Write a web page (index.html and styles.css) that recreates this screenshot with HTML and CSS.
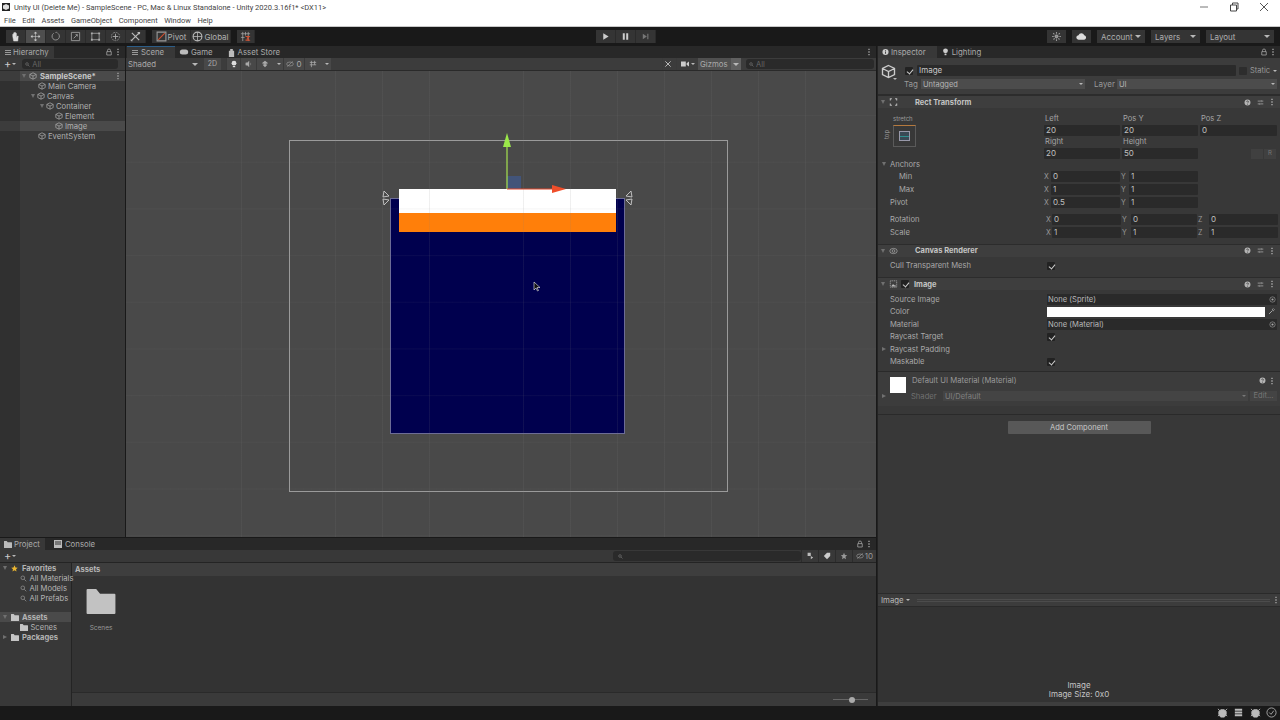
FILE: index.html
```html
<!DOCTYPE html>
<html>
<head>
    <title>Unity UI (Delete Me)</title>
    <link rel="stylesheet" href="styles.css">
</head>
<body>
    <svg class="defs" width="0" height="0">
        <symbol id="cube" viewBox="0 0 10 10"><path d="M5 1 9 3v4L5 9 1 7V3zM1 3l4 2 4-2M5 5v4" fill="none" stroke="currentColor" stroke-width=".9"/></symbol>
        <symbol id="kebab" viewBox="0 0 4 10"><path d="M1.200 1h1.600v1.600H1.200zM1.200 4.200h1.600v1.600H1.200zM1.200 7.400h1.600V9H1.200z" fill="currentColor"/></symbol>
        <symbol id="lock" viewBox="0 0 8 10"><path d="M2 4.500V3a2 2 0 0 1 4 0v1.500M1 4.500h6V9H1z" fill="none" stroke="currentColor"/></symbol>
        <symbol id="help" viewBox="0 0 8 8"><circle cx="4" cy="4" r="3.400" fill="currentColor"/><path d="M3 3.200a1 1 0 1 1 1.400.9L4 4.600M4 5.400v1" fill="none" stroke="#333" stroke-width=".8"/></symbol>
        <symbol id="sliders" viewBox="0 0 10 10"><path d="M1 3h4M7 3h2M1 7h2M5 7h4M6 1.500v3M4 5.500v3" fill="none" stroke="currentColor"/></symbol>
        <symbol id="search" viewBox="0 0 10 10"><circle cx="4" cy="4" r="2.600" fill="none" stroke="currentColor"/><path d="m6 6 3 3" stroke="currentColor"/></symbol>
        <symbol id="target" viewBox="0 0 10 10"><circle cx="5" cy="5" r="3.800" fill="none" stroke="currentColor" stroke-width=".8"/><circle cx="5" cy="5" r="1.500" fill="currentColor"/></symbol>
        <symbol id="folder" viewBox="0 0 30 26"><path d="M1 0h9l4 5h15a1 1 0 0 1 1 1v19a1 1 0 0 1-1 1H1a1 1 0 0 1-1-1V1a1 1 0 0 1 1-1z" fill="currentColor"/></symbol>
        <symbol id="bug" viewBox="0 0 12 12"><path d="M4 3h4l2 2v3l-2 3H4L2 8V5zM1 2l2 2M11 2 9 4M1 10l2-2M11 10 9 8" fill="currentColor" stroke="currentColor"/></symbol>
    </svg>

    <div class="titlebar">
        <div class="title-row">
            <span class="app-icon"><svg viewBox="0 0 8 8"><path d="M4 1 7 2.600v3L4 7 1 5.600v-3z" fill="#ddd"/></svg></span>
            <span class="title-text">Unity UI (Delete Me) - SampleScene - PC, Mac &amp; Linux Standalone - Unity 2020.3.16f1* &lt;DX11&gt;</span>
            <div class="win-controls">
                <svg viewBox="0 0 10 10"><path d="M1 5h8" stroke="#777"/></svg>
                <svg viewBox="0 0 10 10"><path d="M1.500 3h6v6h-6zM3.500 3V1h5.500v6H7.500" fill="none" stroke="#444"/></svg>
                <svg viewBox="0 0 10 10"><path d="m1 1 8 8M9 1 1 9" stroke="#555"/></svg>
            </div>
        </div>
        <div class="menu-row">
            <span>File</span><span>Edit</span><span>Assets</span><span>GameObject</span><span>Component</span><span>Window</span><span>Help</span>
        </div>
    </div>

    <div class="toolbar">
        <div class="tool-group tools">
            <button class="tool"><svg viewBox="0 0 12 12"><path d="M3 6V3.500h1V6V2h1v4V1.500h1V6V2.500h1V7l1-1.500h1L8.500 11H4z" fill="#ddd" stroke="#ddd" stroke-width=".5"/></svg></button>
            <button class="tool active"><svg viewBox="0 0 12 12"><path d="M6 1v10M1 6h10M6 1 4.800 2.500h2.400zM6 11 4.800 9.500h2.400zM1 6l1.500-1.200v2.400zM11 6 9.500 4.800v2.400z" fill="#ccc" stroke="#ccc" stroke-width=".6"/></svg></button>
            <button class="tool"><svg viewBox="0 0 12 12"><path d="M4 2.500a4 4 0 1 0 4.500 0M8 1.500a4 4 0 0 0-2 .2" fill="none" stroke="#999"/></svg></button>
            <button class="tool"><svg viewBox="0 0 12 12"><path d="M1.500 1.500h9v9h-9zM4 8l4-4M6 4h2v2" fill="none" stroke="#999"/></svg></button>
            <button class="tool"><svg viewBox="0 0 12 12"><path d="M2 2.500h8v7H2z" fill="none" stroke="#999"/><path d="M1 1.500h2v2H1zM9 1.500h2v2H9zM1 8.500h2v2H1zM9 8.500h2v2H9z" fill="#aaa"/></svg></button>
            <button class="tool"><svg viewBox="0 0 12 12"><circle cx="6" cy="6" r="4.500" fill="none" stroke="#888" stroke-dasharray="2 1"/><path d="M3 6h6M6 3v6" stroke="#aaa"/></svg></button>
            <button class="tool"><svg viewBox="0 0 12 12"><path d="m2 2 8 8M10 2 2 10" stroke="#bbb" stroke-width="1.300"/><path d="M8 1h3v2L9.500 4zM1 9l2 2-1 .5-1.500-1.500z" fill="#bbb"/></svg></button>
        </div>
        <div class="tool-group handle">
            <button class="tool pivot"><svg viewBox="0 0 10 10"><path d="M1 1h8v8H1z" fill="none" stroke="#999"/><path d="M2 8 8 2" stroke="#d05030"/></svg>Pivot</button>
            <button class="tool global"><svg viewBox="0 0 10 10"><circle cx="5" cy="5" r="4" fill="none" stroke="#bbb"/><path d="M1 5h8M5 1v8" stroke="#bbb" stroke-width=".7"/></svg>Global</button>
        </div>
        <button class="tool snap"><svg viewBox="0 0 12 12"><path d="M3 1v10M6 1v4M9 1v10M1 3h10M1 7h4" stroke="#aaa" stroke-width=".8"/><path d="M6 6h4l-2 2 2 2H6" fill="none" stroke="#d05030" stroke-width="1.200"/></svg></button>

        <div class="tool-group playback">
            <button class="tool"><svg viewBox="0 0 10 10"><path d="M2.500 1.500 8.500 5l-6 3.500z" fill="#ccc"/></svg></button>
            <button class="tool"><svg viewBox="0 0 10 10"><path d="M2 1.500h2.200v7H2zM5.800 1.500H8v7H5.800z" fill="#ccc"/></svg></button>
            <button class="tool"><svg viewBox="0 0 10 10"><path d="M2 2 6.500 5 2 8zM7 2h1.200v6H7z" fill="#777"/></svg></button>
        </div>

        <div class="toolbar-right">
            <button class="tool square"><svg viewBox="0 0 10 10"><path d="M5 1v8M1 5h8M2 2l6 6M8 2 2 8" stroke="#999" stroke-dasharray="1.500 .7"/></svg></button>
            <button class="tool square"><svg viewBox="0 0 12 8"><path d="M3 7.500a2.500 2.500 0 0 1-.3-5A3.500 3.500 0 0 1 9 2.600a2.500 2.500 0 0 1 0 4.900z" fill="#ddd"/></svg></button>
            <button class="tool drop account">Account<i class="caret"></i></button>
            <button class="tool drop layers">Layers<i class="caret"></i></button>
            <button class="tool drop layout-btn">Layout<i class="caret"></i></button>
        </div>
    </div>

    <div class="workspace">
        <div class="left-col">
            <div class="top-row">
                <section class="hierarchy">
                    <div class="tabstrip">
                        <div class="tab current"><span class="burger"></span>Hierarchy</div>
                        <div class="tab-icons"><svg class="ic-lock"><use href="#lock"/></svg><svg class="ic-kebab"><use href="#kebab"/></svg></div>
                    </div>
                    <div class="panel-tools">
                        <span class="plus">+</span><i class="caret"></i>
                        <div class="search small"><svg><use href="#search"/></svg>All</div>
                    </div>
                    <div class="tree">
                        <div class="tree-row scene-row"><i class="arrow"></i><svg class="cube"><use href="#cube"/></svg><b>SampleScene*</b><svg class="ic-kebab end"><use href="#kebab"/></svg></div>
                        <div class="tree-row d1"><svg class="cube"><use href="#cube"/></svg>Main Camera</div>
                        <div class="tree-row d1"><i class="arrow"></i><svg class="cube"><use href="#cube"/></svg>Canvas</div>
                        <div class="tree-row d2"><i class="arrow"></i><svg class="cube"><use href="#cube"/></svg>Container</div>
                        <div class="tree-row d3"><svg class="cube"><use href="#cube"/></svg>Element</div>
                        <div class="tree-row d3 selected"><svg class="cube"><use href="#cube"/></svg>Image</div>
                        <div class="tree-row d1"><svg class="cube"><use href="#cube"/></svg>EventSystem</div>
                    </div>
                </section>

                <section class="scene">
                    <div class="tabstrip">
                        <div class="tab current blue-top"><span class="burger"></span>Scene</div>
                        <div class="tab"><svg class="tab-ic" viewBox="0 0 12 8"><rect x="1" y="1" width="10" height="6" rx="3" fill="#bbb"/></svg>Game</div>
                        <div class="tab"><svg class="tab-ic bag" viewBox="0 0 8 10"><path d="M1 3h6v7H1zM2.500 3V1h3v2" fill="#bbb"/></svg>Asset Store</div>
                        <div class="tab-icons"><svg class="ic-kebab"><use href="#kebab"/></svg></div>
                    </div>
                    <div class="scene-tools">
                        <div class="shaded">Shaded<i class="caret"></i></div>
                        <div class="btn2d">2D</div>
                        <div class="scene-btn first-btn"><svg viewBox="0 0 10 10"><circle cx="5" cy="4" r="3" fill="#ddd"/><path d="M3.500 7.500h3V9h-3z" fill="#ddd"/></svg></div>
                        <div class="scene-btn"><svg viewBox="0 0 10 10"><path d="M1 3.500h2l2-2v7l-2-2H1zM7 3.500v3" fill="#aaa" stroke="#aaa" stroke-width=".5"/></svg></div>
                        <div class="scene-btn fx"><svg viewBox="0 0 10 10"><path d="M5 1 9 4 5 5 1 4zM5 5l3 1-3 3-3-3z" fill="#aaa"/></svg><i class="caret"></i></div>
                        <div class="scene-btn eye"><svg viewBox="0 0 12 10"><ellipse cx="6" cy="5" rx="5" ry="3" fill="none" stroke="#999"/><path d="M2 9 10 1" stroke="#999"/></svg><em>0</em></div>
                        <div class="scene-btn fx"><svg viewBox="0 0 10 10"><path d="M3 1v8M7 1v5M1 3h8M1 6h8" stroke="#aaa"/></svg><i class="caret"></i></div>
                        <div class="scene-tools-right">
                            <div class="scene-btn flat x-tool"><svg viewBox="0 0 12 12"><path d="m2 2 8 8M10 2 2 10" stroke="#ccc" stroke-width="1.300"/></svg></div>
                            <div class="scene-btn flat cam"><svg viewBox="0 0 10 8"><path d="M0 1h6v6H0zM7 3l3-2v6L7 5z" fill="#ccc"/></svg><i class="caret"></i></div>
                            <div class="gizmos">Gizmos<span class="gizmo-drop"><i class="caret"></i></span></div>
                            <div class="search big"><svg><use href="#search"/></svg>All</div>
                        </div>
                    </div>
                    <div class="viewport">
                        <div class="canvas-frame"></div>
                        <div class="navy"></div>
                        <div class="element-white"></div>
                        <div class="element-orange"></div>
                        <div class="grid-over"></div>
                        <svg class="gizmo-overlay" viewBox="0 0 750 466" width="750" height="466">
                            <rect x="381" y="105" width="14" height="13" fill="#3f5b94" fill-opacity=".65"/>
                            <path d="M381 118V75" stroke="#a6e34f" stroke-width="1.200"/>
                            <path d="M381 62 385 76H377z" fill="#9be84a"/>
                            <path d="M381 118h50" stroke="#e0492c" stroke-width="1.200"/>
                            <path d="M440 118 426 114v8z" fill="#ef4e2a"/>
                            <path d="M258 120 263 125 257 126zM257 128 263 129 258 134z" fill="none" stroke="#ccc" stroke-width=".9"/>
                            <path d="M505 120 500 125 506 126zM506 128 500 129 505 134z" fill="none" stroke="#ccc" stroke-width=".9"/>
                            <path d="M408 211v8l2-2 1.500 3 1-.5-1.500-3h3z" fill="#111" stroke="#eee" stroke-width=".6"/>
                        </svg>
                    </div>
                </section>
            </div>

            <section class="project">
                <div class="tabstrip">
                    <div class="tab current"><svg class="tab-ic small-ic"><use href="#folder"/></svg>Project</div>
                    <div class="tab"><svg class="tab-ic" viewBox="0 0 10 8"><path d="M1 0h8v8H1z" fill="#bbb"/><path d="M2 2h6M2 4h6" stroke="#333"/></svg>Console</div>
                    <div class="tab-icons"><svg class="ic-lock"><use href="#lock"/></svg><svg class="ic-kebab"><use href="#kebab"/></svg></div>
                </div>
                <div class="panel-tools project-tools">
                    <span class="plus">+</span><i class="caret"></i>
                    <div class="search project-search"><svg><use href="#search"/></svg></div>
                    <div class="project-btns">
                        <span><svg viewBox="0 0 10 10"><path d="M2 1h4v4H2zM6 5l3 2-3 2z" fill="#bbb"/></svg></span>
                        <span><svg viewBox="0 0 10 10"><path d="M1 5 5 1h4v4L5 9z" fill="#ccc"/></svg></span>
                        <span><svg viewBox="0 0 10 10"><path d="m5 1 1.200 2.800 2.800.2-2.200 2 .7 3L5 7.500 2.500 9l.7-3L1 4l2.800-.2z" fill="#999"/></svg></span>
                        <span class="hidden-count"><svg viewBox="0 0 12 10"><ellipse cx="6" cy="5" rx="5" ry="3" fill="none" stroke="#999"/><path d="M2 9 10 1" stroke="#999"/></svg>10</span>
                    </div>
                </div>
                <div class="project-body">
                    <div class="project-side">
                        <div class="side-row head"><i class="arrow"></i><svg class="star" viewBox="0 0 10 10"><path d="m5 .5 1.400 3 3.200.3-2.400 2.200.7 3.300L5 7.600 2.100 9.300l.7-3.300L.4 3.800l3.200-.3z" fill="#eab530"/></svg><b>Favorites</b></div>
                        <div class="side-row sub"><svg class="loupe"><use href="#search"/></svg>All Materials</div>
                        <div class="side-row sub"><svg class="loupe"><use href="#search"/></svg>All Models</div>
                        <div class="side-row sub"><svg class="loupe"><use href="#search"/></svg>All Prefabs</div>
                        <div class="side-gap"></div>
                        <div class="side-row head selected"><i class="arrow"></i><svg class="mini-folder"><use href="#folder"/></svg><b>Assets</b></div>
                        <div class="side-row sub folder-sub"><svg class="mini-folder"><use href="#folder"/></svg>Scenes</div>
                        <div class="side-row head"><i class="arrow closed"></i><svg class="mini-folder"><use href="#folder"/></svg><b>Packages</b></div>
                    </div>
                    <div class="project-main">
                        <div class="breadcrumb">Assets</div>
                        <div class="files">
                            <div class="file"><svg class="big-folder"><use href="#folder"/></svg><span>Scenes</span></div>
                        </div>
                        <div class="project-foot"><div class="slider"><span></span></div></div>
                    </div>
                </div>
            </section>
        </div>

        <aside class="inspector">
            <div class="tabstrip">
                <div class="tab current"><svg class="tab-ic" viewBox="0 0 8 8"><circle cx="4" cy="4" r="3.500" fill="#ccc"/><path d="M4 3.500V6M4 2v1" stroke="#333"/></svg>Inspector</div>
                <div class="tab"><svg class="tab-ic" viewBox="0 0 8 10"><circle cx="4" cy="3.500" r="3" fill="#ccc"/><path d="M2.800 7h2.400v2H2.800z" fill="#ccc"/></svg>Lighting</div>
                <div class="tab-icons"><svg class="ic-lock"><use href="#lock"/></svg><svg class="ic-kebab"><use href="#kebab"/></svg></div>
            </div>

            <div class="object-head">
                <div class="object-icon"><svg class="object-cube"><use href="#cube"/></svg><i class="caret"></i></div>
                <div class="object-rows">
                    <div class="name-row">
                        <span class="check"></span>
                        <div class="field name-field">Image</div>
                        <span class="check empty"></span><span class="static">Static</span><i class="caret"></i>
                    </div>
                    <div class="tag-row">
                        <span class="tag-label">Tag</span>
                        <div class="select tag-select">Untagged<i class="caret"></i></div>
                        <span class="tag-label layer">Layer</span>
                        <div class="select layer-select">UI<i class="caret"></i></div>
                    </div>
                </div>
            </div>

            <div class="comp-head first">
                <i class="arrow"></i><svg class="comp-ic" viewBox="0 0 10 10"><path d="M1 3V1h2M7 1h2v2M9 7v2H7M3 9H1V7" fill="none" stroke="#bbb" stroke-width="1.300"/></svg>
                <b>Rect Transform</b>
                <div class="comp-actions"><svg><use href="#help"/></svg><svg><use href="#sliders"/></svg><svg class="ic-kebab"><use href="#kebab"/></svg></div>
            </div>

            <div class="rect-body">
                <div class="anchor-box">
                    <span class="stretch">stretch</span>
                    <span class="top-label">top</span>
                    <div class="anchor-preset"><div class="anchor-inner"></div></div>
                </div>
                <div class="rect-grid">
                    <label>Left</label><label>Pos Y</label><label>Pos Z</label>
                    <div class="field">20</div><div class="field">20</div><div class="field">0</div>
                    <label>Right</label><label>Height</label><div class="blueprint"><span></span><span>R</span></div>
                    <div class="field">20</div><div class="field">50</div>
                </div>
            </div>

            <div class="prop anchors-head"><i class="arrow"></i>Anchors</div>
            <div class="prop indent"><span class="prop-name">Min</span><div class="xy"><em>X</em><div class="field">0</div><em>Y</em><div class="field">1</div></div></div>
            <div class="prop indent"><span class="prop-name">Max</span><div class="xy"><em>X</em><div class="field">1</div><em>Y</em><div class="field">1</div></div></div>
            <div class="prop pivot-row"><span class="prop-name">Pivot</span><div class="xy"><em>X</em><div class="field">0.5</div><em>Y</em><div class="field">1</div></div></div>
            <div class="prop rotation-row"><span class="prop-name">Rotation</span><div class="xyz"><em>X</em><div class="field">0</div><em>Y</em><div class="field">0</div><em>Z</em><div class="field">0</div></div></div>
            <div class="prop"><span class="prop-name">Scale</span><div class="xyz"><em>X</em><div class="field">1</div><em>Y</em><div class="field">1</div><em>Z</em><div class="field">1</div></div></div>

            <div class="comp-head">
                <i class="arrow"></i><svg class="comp-ic" viewBox="0 0 12 10"><ellipse cx="6" cy="5" rx="5" ry="3.500" fill="none" stroke="#bbb" stroke-width=".8"/><circle cx="6" cy="5" r="1.800" fill="none" stroke="#bbb" stroke-width=".8"/></svg>
                <b>Canvas Renderer</b>
                <div class="comp-actions"><svg><use href="#help"/></svg><svg><use href="#sliders"/></svg><svg class="ic-kebab"><use href="#kebab"/></svg></div>
            </div>
            <div class="prop cull"><span class="prop-name">Cull Transparent Mesh</span><span class="check"></span></div>

            <div class="comp-head image-head">
                <i class="arrow"></i><svg class="comp-ic" viewBox="0 0 10 10"><path d="M1 1h8v8H1z" fill="none" stroke="#aaa" stroke-dasharray="1.500 .8"/><path d="m2 8 2.500-3L6 7l1-1 1 2z" fill="#bbb"/></svg>
                <span class="check"></span><b>Image</b>
                <div class="comp-actions"><svg><use href="#help"/></svg><svg><use href="#sliders"/></svg><svg class="ic-kebab"><use href="#kebab"/></svg></div>
            </div>
            <div class="prop first-image"><span class="prop-name">Source Image</span><div class="objfield">None (Sprite)<svg><use href="#target"/></svg></div></div>
            <div class="prop"><span class="prop-name">Color</span><div class="colorfield"><span class="swatch"></span><svg viewBox="0 0 10 10"><path d="M1.500 8.500 6 4M6 2.500l1.500-1.500L9 2.500 7.500 4z" stroke="#bbb" stroke-width="1.200"/></svg></div></div>
            <div class="prop"><span class="prop-name">Material</span><div class="objfield">None (Material)<svg><use href="#target"/></svg></div></div>
            <div class="prop"><span class="prop-name">Raycast Target</span><span class="check"></span></div>
            <div class="prop"><i class="arrow closed"></i><span class="prop-name">Raycast Padding</span></div>
            <div class="prop"><span class="prop-name">Maskable</span><span class="check"></span></div>

            <div class="material">
                <div class="mat-swatch"></div>
                <i class="arrow closed"></i>
                <div class="mat-rows">
                    <div class="mat-title">Default UI Material (Material)<div class="comp-actions"><svg><use href="#help"/></svg><svg class="ic-kebab"><use href="#kebab"/></svg></div></div>
                    <div class="mat-shader"><span>Shader</span><div class="select shader-select">UI/Default<i class="caret"></i></div><div class="edit-btn">Edit...</div></div>
                </div>
            </div>

            <div class="add-wrap"><button class="add-component">Add Component</button></div>
            <div class="inspector-spacer"></div>

            <div class="preview-bar">
                <span class="preview-name">Image<i class="caret"></i></span>
                <div class="preview-grip"></div>
                <svg class="ic-kebab"><use href="#kebab"/></svg>
            </div>
            <div class="preview">
                <div>Image</div>
                <div>Image Size: 0x0</div>
            </div>
        </aside>
    </div>

    <div class="statusbar">
        <svg><use href="#bug"/></svg>
        <svg viewBox="0 0 12 12"><path d="M2 2h8v2H2zM2 5h8v2H2zM2 8h8v2H2z" fill="#bbb"/></svg>
        <svg><use href="#bug"/></svg>
        <svg viewBox="0 0 12 12"><circle cx="6" cy="6" r="5" fill="none" stroke="#aaa"/><path d="m3.500 6 2 2 3-4" fill="none" stroke="#aaa"/></svg>
    </div>
</body>
</html>
```

FILE: styles.css
```css
* {
    margin: 0;
    padding: 0;
    box-sizing: border-box;
}

html, body {
    width: 1280px;
    height: 720px;
    overflow: hidden;
}

body {
    font-family: Inter, "Liberation Sans", sans-serif;
    font-size: 7.5px;
    color: #b8b8b8;
    background: #191919;
    display: flex;
    flex-direction: column;
}

.defs {
    position: absolute;
}

button {
    border: 0;
    font: inherit;
    color: inherit;
}

svg {
    display: block;
    flex: none;
}

/* Window chrome */
.titlebar {
    height: 27px;
    background: #fff;
    color: #444;
    border-bottom: 1px solid #c8c8c8;
    font-family: Roboto, sans-serif;
    font-size: 7.5px;
    flex: none;
}

.title-row {
    height: 14px;
    display: flex;
    align-items: center;
    padding-left: 2px;
}

.app-icon {
    width: 8px;
    height: 8px;
    background: #222;
    margin-right: 4px;
}

.win-controls {
    margin-left: auto;
    display: flex;
    gap: 20px;
    padding-right: 11px;
}

.win-controls svg {
    width: 10px;
    height: 10px;
}

.menu-row {
    display: flex;
    gap: 6.500px;
    padding-left: 4px;
    height: 12px;
    align-items: center;
}

.toolbar {
    height: 19px;
    background: #191919;
    display: flex;
    align-items: center;
    padding-left: 6px;
    position: relative;
    flex: none;
}

.tool-group {
    display: flex;
}

.tool {
    height: 13px;
    background: #343434;
    display: flex;
    align-items: center;
    justify-content: center;
    color: #b0b0b0;
    font-size: 8px;
    border-right: 1px solid #2a2a2a;
}

.tool svg {
    width: 11px;
    height: 11px;
}

.tools .tool {
    width: 20px;
}

.tool.active {
    background: #4e4e4e;
}

.handle {
    margin-left: 6px;
}

.pivot {
    width: 39px;
    gap: 1px;
}

.global {
    width: 40px;
    gap: 1px;
}

.snap {
    width: 18px;
    margin-left: 6px;
}

.playback {
    margin-left: 341px;
}

.playback .tool {
    width: 20px;
}

.playback .tool svg {
    width: 9px;
    height: 9px;
}

.toolbar-right {
    margin-left: auto;
    display: flex;
    gap: 6px;
    padding-right: 6px;
}

.square {
    width: 19px;
    border: 0;
}

.drop {
    justify-content: space-between;
    padding: 0 4px;
    border: 0;
}

.account {
    width: 48px;
}

.layers {
    width: 49px;
}

.layout-btn {
    width: 68px;
}

.caret {
    display: inline-block;
    width: 0;
    height: 0;
    border-left: 3px solid transparent;
    border-right: 3px solid transparent;
    border-top: 3px solid #b8b8b8;
    flex: none;
}

.arrow {
    display: inline-block;
    width: 0;
    height: 0;
    border-left: 2.500px solid transparent;
    border-right: 2.500px solid transparent;
    border-top: 4px solid #707070;
    flex: none;
}

.arrow.closed {
    border-top: 2.500px solid transparent;
    border-bottom: 2.500px solid transparent;
    border-left: 4px solid #707070;
    border-right: 0;
}

/* Layout */
.workspace {
    height: 660px;
    display: grid;
    grid-template-columns: 877px 403px;
    flex: none;
}

.left-col {
    display: flex;
    flex-direction: column;
    border-right: 1px solid #191919;
}

.top-row {
    height: 492px;
    display: grid;
    grid-template-columns: 126px 1fr;
    border-bottom: 1px solid #191919;
    flex: none;
}

.tabstrip {
    height: 12px;
    background: #282828;
    display: flex;
    align-items: stretch;
    position: relative;
}

.tab {
    display: flex;
    align-items: center;
    gap: 2px;
    padding: 0 5px;
    color: #aaa;
    font-size: 7.800px;
}

.tab.current {
    background: #383838;
}

.blue-top {
    box-shadow: inset 0 1px 0 #2c5d87;
}

.burger {
    width: 6px;
    height: 5px;
    border-top: 1px solid #999;
    border-bottom: 1px solid #999;
    position: relative;
}

.burger::after {
    content: "";
    position: absolute;
    left: 0;
    right: 0;
    top: 1px;
    height: 1px;
    background: #999;
}

.tab-ic {
    width: 10px;
    height: 8px;
}

.tab-ic.bag {
    width: 7px;
    height: 9px;
    margin-right: 1px;
}

.small-ic {
    width: 8px;
    height: 7px;
    color: #bbb;
}

.tab-icons {
    margin-left: auto;
    display: flex;
    align-items: center;
    gap: 4px;
    padding-right: 5px;
}

.ic-lock {
    width: 6px;
    height: 8px;
    color: #aaa;
}

.ic-kebab {
    width: 4px;
    height: 8px;
    color: #aaa;
}

/* Hierarchy */
.hierarchy {
    background: #383838;
    border-right: 1px solid #191919;
    display: flex;
    flex-direction: column;
}

.panel-tools {
    height: 13px;
    display: flex;
    align-items: center;
    background: #3a3a3a;
    border-bottom: 1px solid #2a2a2a;
    padding-left: 4px;
}

.plus {
    font-size: 11px;
    line-height: 1;
    color: #ccc;
    margin-right: 1px;
}

.panel-tools .caret {
    border-width: 2.500px 2.500px 0;
}

.search {
    background: #2a2a2a;
    border-radius: 3px;
    height: 10px;
    display: flex;
    align-items: center;
    gap: 2px;
    padding-left: 3px;
    color: #666;
}

.search svg {
    width: 5px;
    height: 5px;
    color: #888;
}

.search.small {
    width: 96px;
    margin-left: 6px;
}

.tree {
    flex: 1;
    background: linear-gradient(90deg, #303030 20px, #383838 20px);
    color: #b0b0b0;
    font-size: 7.700px;
}

.tree-row {
    height: 10px;
    display: flex;
    align-items: center;
    gap: 2px;
}

.tree-row .cube {
    width: 8px;
    height: 8px;
    color: #aaa;
}

.scene-row {
    background: linear-gradient(90deg, #3c3c3c 20px, #4a4a4a 20px);
    padding-left: 22px;
    height: 10px;
    color: #c8c8c8;
    gap: 3px;
}

.ic-kebab.end {
    margin-left: auto;
    margin-right: 5px;
}

.d1 {
    padding-left: 38px;
}

.d1 .arrow {
    margin-left: -7px;
}

.d2 {
    padding-left: 47px;
}

.d2 .arrow {
    margin-left: -7px;
}

.d3 {
    padding-left: 55px;
}

.tree-row.selected {
    background: linear-gradient(90deg, #3c3c3c 20px, #4a4a4a 20px);
}

/* Scene */
.scene {
    display: flex;
    flex-direction: column;
    background: #282828;
}

.scene .tab {
    padding: 0 11px 0 4px;
}

.scene .blue-top {
    margin-left: 1px;
    width: 48px;
    padding: 0 5px;
    gap: 3px;
}

.scene-tools {
    height: 13px;
    background: #3c3c3c;
    display: flex;
    align-items: center;
    border-bottom: 1px solid #2a2a2a;
    color: #aaa;
}

.shaded {
    width: 76px;
    padding: 0 4px 0 2px;
    display: flex;
    align-items: center;
    justify-content: space-between;
    font-size: 7.800px;
}

.btn2d {
    width: 17px;
    height: 12px;
    margin-left: 2px;
    background: #484848;
    text-align: center;
    line-height: 12px;
    font-size: 7px;
}

.scene-btn {
    width: 16px;
    height: 12px;
    background: #484848;
    border-left: 1px solid #3a3a3a;
    display: flex;
    align-items: center;
    justify-content: center;
    gap: 2px;
}

.scene-btn svg {
    width: 8px;
    height: 8px;
}

.scene-btn .caret {
    border-width: 2.500px 2.500px 0;
}

.scene-btn em {
    font-style: normal;
    font-size: 8px;
}

.scene-btn.first-btn {
    width: 14px;
    margin-left: 5px;
}

.scene-btn.fx {
    width: 27px;
    justify-content: space-between;
    padding: 0 2px 0 4px;
}

.scene-btn.eye {
    width: 21px;
}

.scene-tools-right {
    margin-left: auto;
    display: flex;
    align-items: center;
}

.scene-btn.flat {
    background: #3c3c3c;
}

.scene-btn.x-tool {
    width: 14px;
    padding-right: 3px;
}

.scene-btn.cam {
    width: 22px;
}

.gizmos {
    width: 43px;
    height: 12px;
    background: #505050;
    display: flex;
    align-items: center;
    padding-left: 2px;
    font-size: 7.800px;
    justify-content: space-between;
}

.gizmo-drop {
    width: 10px;
    height: 12px;
    background: #606060;
    display: flex;
    align-items: center;
    justify-content: center;
}

.search.big {
    width: 128px;
    margin: 0 2px 0 5px;
}

.viewport {
    flex: 1;
    position: relative;
    background-color: #494949;
    overflow: hidden;
}

.grid-over {
    position: absolute;
    left: 0;
    top: 0;
    right: 0;
    bottom: 0;
    background-image:
        linear-gradient(90deg, rgba(128, 128, 128, .12) 1px, transparent 1px),
        linear-gradient(rgba(128, 128, 128, .08) 1px, transparent 1px);
    background-size: 47px 46.700px;
    background-position: 21px 44px;
}

.canvas-frame {
    position: absolute;
    left: 163px;
    top: 69px;
    width: 439px;
    height: 352px;
    border: 1px solid #9a9a9a;
}

.navy {
    position: absolute;
    left: 264px;
    top: 127px;
    width: 235px;
    height: 236px;
    background: #00004e;
    box-shadow: inset 0 0 0 1px #6c6c96;
}

.element-white {
    position: absolute;
    left: 273px;
    top: 118px;
    width: 217px;
    height: 24px;
    background: #fff;
}

.element-orange {
    position: absolute;
    left: 273px;
    top: 142px;
    width: 217px;
    height: 19px;
    background: #ff7f0a;
}

.gizmo-overlay {
    position: absolute;
    left: 0;
    top: 0;
}

/* Project */
.project {
    flex: 1;
    display: flex;
    flex-direction: column;
    background: #333;
}

.project .tab {
    gap: 2px;
    padding: 0 5px 0 4px;
}

.project .tab + .tab {
    margin-left: 4px;
    gap: 2px;
}

.project-tools {
    height: 13px;
    background: #383838;
    border-bottom: 1px solid #242424;
}

.project-search {
    width: 190px;
    margin-left: 597px;
}

.project-search svg {
    margin-left: 2px;
}

.project-btns {
    display: flex;
    height: 12px;
    margin-left: auto;
}

.project-btns span {
    width: 17px;
    display: flex;
    align-items: center;
    justify-content: center;
    border-left: 1px solid #2c2c2c;
}

.project-btns svg {
    width: 8px;
    height: 8px;
}

.project-btns .hidden-count {
    width: 24px;
    gap: 1px;
    font-size: 8px;
    color: #999;
}

.project-body {
    flex: 1;
    display: grid;
    grid-template-columns: 72px 1fr;
}

.project-side {
    background: #383838;
    border-right: 1px solid #242424;
    font-size: 7.600px;
    color: #b4b4b4;
}

.side-row {
    height: 10px;
    display: flex;
    align-items: center;
    gap: 2px;
    white-space: nowrap;
}

.side-row.selected {
    background: #4a4a4a;
}

.head {
    padding-left: 3px;
}

.star {
    width: 7px;
    height: 7px;
    margin: 0 2px;
}

.sub {
    padding-left: 20px;
    gap: 2.500px;
}

.loupe {
    width: 7px;
    height: 7px;
    color: #999;
}

.mini-folder {
    width: 8px;
    height: 7px;
    color: #c4c4c4;
    margin: 0 1px 0 2px;
}

.side-gap {
    height: 9px;
}

.sub.folder-sub .mini-folder {
    margin: 0;
}

.project-main {
    display: flex;
    flex-direction: column;
}

.breadcrumb {
    height: 13px;
    background: #3e3e3e;
    display: flex;
    align-items: center;
    padding-left: 3px;
    font-weight: 700;
    font-size: 7.500px;
}

.files {
    flex: 1;
    padding: 13px 0 0 14px;
}

.file {
    width: 30px;
    display: flex;
    flex-direction: column;
    align-items: center;
    gap: 10px;
    font-size: 6.500px;
    color: #999;
}

.big-folder {
    width: 30px;
    height: 25px;
    color: #c2c2c2;
}

.project-foot {
    height: 14px;
    background: #3a3a3a;
    border-top: 1px solid #2a2a2a;
    display: flex;
    align-items: center;
    justify-content: flex-end;
    padding-right: 8px;
}

.slider {
    width: 35px;
    height: 1px;
    background: #666;
    display: flex;
    align-items: center;
    justify-content: center;
    padding-left: 3px;
}

.slider span {
    width: 6px;
    height: 6px;
    border-radius: 50%;
    background: #aaa;
}

/* Inspector */
.inspector {
    background: #383838;
    display: flex;
    flex-direction: column;
    border-left: 1px solid #232323;
}

.inspector .tabstrip {
    flex: none;
}

.inspector .tab {
    gap: 2px;
    padding: 0 11px 0 4px;
}

.inspector .tab + .tab {
    padding-left: 5px;
    gap: 3px;
}

.inspector .tab-ic {
    width: 7px;
    height: 8px;
}

.object-head {
    display: flex;
    padding: 6px 0 0 3px;
    height: 37px;
    background: #3c3c3c;
    border-bottom: 1px solid #2c2c2c;
    flex: none;
}

.object-icon {
    width: 15px;
    position: relative;
}

.object-icon .caret {
    position: absolute;
    left: 12px;
    top: 14px;
    border-width: 2px 2.500px 0;
}

.object-cube {
    width: 15px;
    height: 15px;
    color: #ccc;
}

.object-rows {
    flex: 1;
    padding-left: 9px;
}

.name-row {
    height: 13px;
    display: flex;
    align-items: center;
    padding-right: 3px;
}

.check {
    width: 8px;
    height: 8px;
    background: #222;
    border-radius: 1px;
    display: inline-block;
    position: relative;
    flex: none;
}

.check::after {
    content: "";
    position: absolute;
    left: 2.500px;
    top: 1px;
    width: 3px;
    height: 5px;
    border: solid #ccc;
    border-width: 0 1px 1px 0;
    transform: rotate(40deg);
}

.check.empty {
    background: #2d2d2d;
}

.check.empty::after {
    display: none;
}

.field {
    background: #2a2a2a;
    height: 11px;
    line-height: 11px;
    padding-left: 2px;
    color: #c0c0c0;
    border-radius: 1px;
    font-size: 8px;
}

.name-field {
    flex: 1;
    margin: 0 3px 0 4px;
    color: #c8c8c8;
}

.static {
    color: #999;
    margin: 0 3px 0 3px;
    font-size: 7.500px;
}

.name-row .caret,
.tag-row .caret {
    border-width: 2.500px 2.500px 0;
}

.tag-row {
    display: flex;
    align-items: center;
    height: 12px;
    margin-top: 1px;
    margin-left: -1px;
    padding-right: 3px;
}

.tag-label {
    color: #999;
    margin-right: 3px;
    font-size: 8px;
}

.tag-label.layer {
    margin-left: 9px;
    margin-right: 2px;
}

.select {
    background: #4c4c4c;
    height: 10px;
    display: flex;
    align-items: center;
    justify-content: space-between;
    padding: 0 2px;
    color: #b4b4b4;
    font-size: 7.500px;
}

.tag-select {
    width: 164px;
}

.layer-select {
    flex: 1;
}

.comp-head {
    height: 13px;
    background: #3e3e3e;
    display: flex;
    align-items: center;
    padding-left: 3px;
    border-top: 1px solid #2c2c2c;
    color: #c4c4c4;
    font-size: 7.500px;
    position: relative;
    flex: none;
    margin-top: 5px;
}

.comp-head.first {
    margin-top: 0;
}

.comp-ic {
    width: 9px;
    height: 8px;
    margin-left: 4px;
}

.comp-head b {
    margin-left: 17px;
}

.image-head .check {
    margin-left: 3px;
}

.image-head b {
    margin-left: 5px;
}

.comp-actions {
    margin-left: auto;
    display: flex;
    align-items: center;
    gap: 6px;
    padding-right: 6px;
}

.comp-actions svg {
    width: 7px;
    height: 7px;
    color: #b4b4b4;
}

.comp-actions .ic-kebab {
    width: 4px;
    height: 8px;
}

.rect-body {
    display: grid;
    grid-template-columns: 166px 1fr;
    height: 49px;
    padding-top: 5px;
    flex: none;
}

.anchor-box {
    position: relative;
}

.stretch {
    position: absolute;
    left: 15px;
    top: 2px;
    font-size: 6px;
    color: #999;
}

.top-label {
    position: absolute;
    left: 4px;
    top: 18px;
    font-size: 6px;
    color: #999;
    transform: rotate(-90deg);
}

.anchor-preset {
    position: absolute;
    left: 15px;
    top: 12px;
    width: 23px;
    height: 22px;
    border: 1px solid #5a5a5a;
    border-top-color: #b5793e;
    padding: 5px;
}

.anchor-inner {
    width: 11px;
    height: 10px;
    background: linear-gradient(#3a4a55 4px, #2f8f8f 4px, #2f8f8f 5px, #3a4a55 5px);
    border: 1px solid #99a;
}

.rect-grid {
    display: grid;
    grid-template-columns: 76px 76px 77px;
    column-gap: 2px;
    grid-auto-rows: 11.500px;
}

.rect-grid label {
    color: #a4a4a4;
    font-size: 7.600px;
    line-height: 11px;
    padding-left: 1px;
}

.rect-grid .field {
    height: 11px;
}

.blueprint {
    grid-row: 3 / 5;
    grid-column: 3;
    display: flex;
    justify-content: flex-end;
    align-items: flex-end;
    gap: 1px;
    padding-right: 1px;
}

.blueprint span {
    width: 12px;
    height: 10px;
    background: #404040;
    font-size: 6px;
    text-align: center;
    color: #777;
}

.prop {
    height: 12.500px;
    display: flex;
    align-items: center;
    padding-left: 12px;
    position: relative;
    color: #a8a8a8;
    font-size: 7.600px;
    flex: none;
}

.prop .arrow {
    position: absolute;
    left: 4px;
    top: 4px;
}

.prop-name {
    width: 157px;
    flex: none;
}

.anchors-head {
    margin-top: 1px;
}

.indent .prop-name {
    padding-left: 9px;
}

.xy {
    display: grid;
    grid-template-columns: 8px 69px 9px 69px;
    column-gap: 0;
    align-items: center;
    margin-left: -4px;
}

.xy em,
.xyz em {
    font-style: normal;
    font-size: 7px;
    color: #999;
    padding-left: 1px;
}

.pivot-row {
    margin-top: 1px;
}

.rotation-row {
    margin-top: 4px;
    height: 13px;
}

.xyz {
    display: grid;
    grid-template-columns: 7px 69px 10px 66px 12px 1fr;
    align-items: center;
    flex: 1;
    margin-left: -2px;
    padding-right: 2px;
}

.cull {
    margin-top: 3px;
}

.first-image {
    margin-top: 3px;
}

.objfield {
    flex: 1;
    height: 11px;
    margin-right: 3px;
    background: #2a2a2a;
    display: flex;
    align-items: center;
    justify-content: space-between;
    padding: 0 1px 0 1px;
    color: #b8b8b8;
}

.objfield svg {
    width: 7px;
    height: 7px;
    color: #aaa;
}

.colorfield {
    flex: 1;
    display: flex;
    align-items: center;
    gap: 3px;
    padding-right: 5px;
}

.swatch {
    flex: 1;
    height: 10px;
    background: #fff;
}

.colorfield svg {
    width: 7px;
    height: 7px;
}

.material {
    margin-top: 3px;
    margin-bottom: 8px;
    height: 35px;
    border-top: 1px solid #2a2a2a;
    background: #3c3c3c;
    display: flex;
    position: relative;
    padding: 2px 3px 0 12px;
    flex: none;
}

.mat-swatch {
    width: 16px;
    height: 16px;
    background: #fff;
    margin-top: 3px;
    flex: none;
}

.material .arrow {
    position: absolute;
    left: 4px;
    top: 22px;
}

.mat-rows {
    flex: 1;
    margin-left: 6px;
}

.mat-title {
    display: flex;
    align-items: center;
    height: 13px;
    color: #999;
    font-size: 7.700px;
}

.mat-title .comp-actions {
    padding-right: 3px;
    gap: 4px;
}

.mat-shader {
    display: flex;
    align-items: center;
    gap: 2px;
    margin-top: 4px;
    color: #707070;
    font-size: 7.600px;
    margin-left: -1px;
}

.mat-shader span {
    width: 30px;
}

.shader-select {
    flex: 1;
    color: #808080;
    background: #444;
}

.shader-select .caret {
    border-top-color: #777;
    border-width: 2.500px 2.500px 0;
}

.edit-btn {
    width: 27px;
    height: 10px;
    background: #444;
    text-align: center;
    line-height: 10px;
    font-size: 7.500px;
    color: #777;
}

.add-wrap {
    display: flex;
    justify-content: center;
    padding-top: 6px;
    border-top: 1px solid #2a2a2a;
    flex: none;
}

.add-component {
    width: 143px;
    height: 13px;
    background: #585858;
    color: #c8c8c8;
    font-size: 7.500px;
    border-radius: 1px;
}

.inspector-spacer {
    flex: 1;
    background: #383838;
}

.preview-bar {
    height: 14px;
    background: #3c3c3c;
    border-top: 1px solid #2a2a2a;
    border-bottom: 1px solid #2a2a2a;
    display: flex;
    align-items: center;
    padding: 0 2px 0 3px;
    flex: none;
    font-size: 7.800px;
}

.preview-name {
    display: flex;
    align-items: center;
    gap: 2px;
    width: 36px;
}

.preview-name .caret {
    border-width: 2.500px 2.500px 0;
}

.preview-grip {
    flex: 1;
    height: 3px;
    border-top: 1px solid #4c4c4c;
    border-bottom: 1px solid #4c4c4c;
    margin-right: 4px;
}

.preview {
    height: 99px;
    background: #333;
    display: flex;
    flex-direction: column;
    justify-content: flex-end;
    align-items: center;
    padding-bottom: 4px;
    color: #c4c4c4;
    font-size: 8px;
    line-height: 8.500px;
    flex: none;
    border-bottom: 4px solid #3e3e3e;
}

.statusbar {
    height: 13px;
    background: #191919;
    display: flex;
    align-items: center;
    justify-content: flex-end;
    gap: 5.500px;
    padding-right: 3px;
    color: #bbb;
    flex: none;
}

.statusbar svg {
    width: 11px;
    height: 11px;
}
```
